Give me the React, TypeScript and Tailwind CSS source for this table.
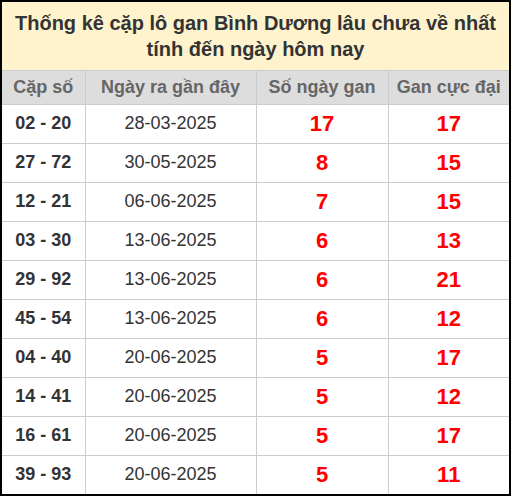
const rows: [string, string, number, number][] = [
  ['02 - 20', '28-03-2025', 17, 17],
  ['27 - 72', '30-05-2025', 8, 15],
  ['12 - 21', '06-06-2025', 7, 15],
  ['03 - 30', '13-06-2025', 6, 13],
  ['29 - 92', '13-06-2025', 6, 21],
  ['45 - 54', '13-06-2025', 6, 12],
  ['04 - 40', '20-06-2025', 5, 17],
  ['14 - 41', '20-06-2025', 5, 12],
  ['16 - 61', '20-06-2025', 5, 17],
  ['39 - 93', '20-06-2025', 5, 11],
];

export default function App() {
  return (
    <div className="w-[511px] h-[496px] bg-white font-['Liberation_Sans',Arial,sans-serif]">
      <div className="border-2 border-black">
        <div className="h-[69px] bg-[#fff3cd] border-b border-[#ccc] flex flex-col items-center justify-center text-[20px] leading-[26px] font-bold text-[#333]">
          <div>Thống kê cặp lô gan Bình Dương lâu chưa về nhất</div>
          <div>tính đến ngày hôm nay</div>
        </div>
        <table className="w-full border-collapse">
          <thead>
            <tr className="h-[33px] bg-[#ddd] text-[18px] font-bold text-[#666]">
              <th className="w-[83px] border-r border-[#ccc] font-bold">Cặp số</th>
              <th className="w-[171px] border-r border-[#ccc] font-bold">Ngày ra gần đây</th>
              <th className="w-[132px] border-r border-[#ccc] font-bold">Số ngày gan</th>
              <th className="font-bold">Gan cực đại</th>
            </tr>
          </thead>
          <tbody>
            {rows.map((r, i) => (
              <tr key={i} className="h-[39px] border-t border-[#ccc] text-center">
                <td className="border-r border-[#ccc] text-[18px] font-bold text-[#333]">{r[0]}</td>
                <td className="border-r border-[#ccc] text-[18px] text-[#333]">{r[1]}</td>
                <td className="border-r border-[#ccc] text-[22px] font-bold text-[#f00]">{r[2]}</td>
                <td className="text-[22px] font-bold text-[#f00]">{r[3]}</td>
              </tr>
            ))}
          </tbody>
        </table>
      </div>
    </div>
  );
}
